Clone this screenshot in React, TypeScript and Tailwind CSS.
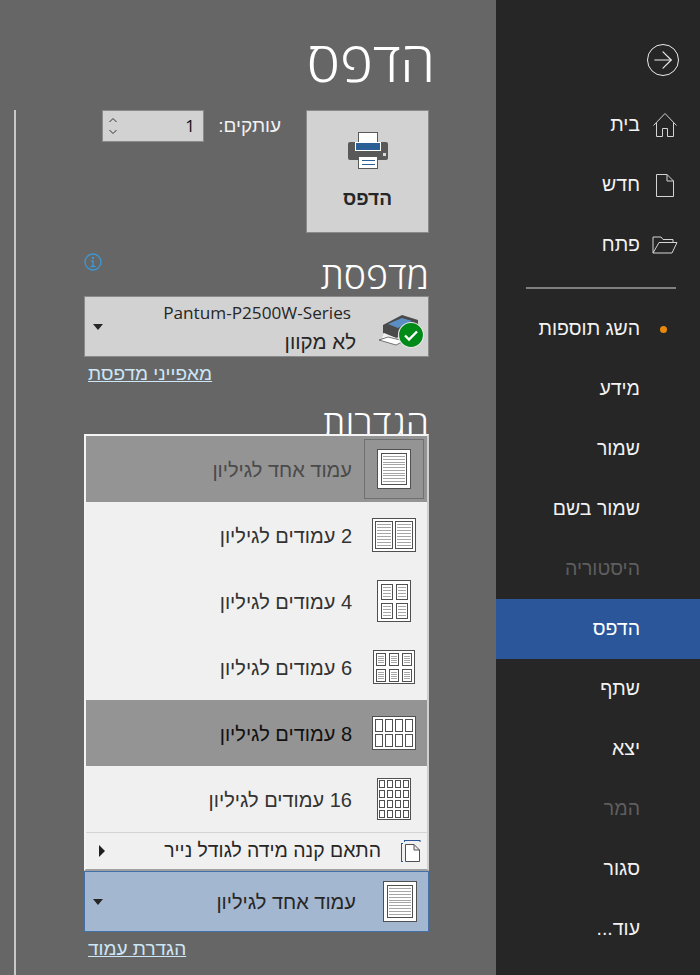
import { ArrowRight } from 'lucide-react'

const FONT = 'font-["Liberation_Sans","Open_Sans",sans-serif]'
const LIGHT = 'font-["Open_Sans","Liberation_Sans",sans-serif] font-light'
const LATIN = 'font-["Open_Sans","Liberation_Sans",sans-serif]'

const NAV_TOP = [
  { label: 'בית', icon: 'home' },
  { label: 'חדש', icon: 'new' },
  { label: 'פתח', icon: 'open' },
]

const NAV_BOTTOM = [
  { label: 'השג תוספות', dot: true },
  { label: 'מידע' },
  { label: 'שמור' },
  { label: 'שמור בשם' },
  { label: 'היסטוריה', disabled: true },
  { label: 'הדפס', active: true },
  { label: 'שתף' },
  { label: 'יצא' },
  { label: 'המר', disabled: true },
  { label: 'סגור' },
  { label: 'עוד...' },
]

function NavIcon({ name }: { name: string }) {
  if (name === 'home') {
    return (
      <svg width="26" height="26" viewBox="0 0 26 26" fill="none" stroke="#d4d4d4" strokeWidth="1">
        <path d="M1.500 13.500 L13 1.500 L24.500 13.500" />
        <path d="M4.500 11 V24.500 H10.500 V16.500 H15.500 V24.500 H21.500 V11" />
      </svg>
    )
  }
  if (name === 'new') {
    return (
      <svg width="20" height="25" viewBox="0 0 20 25" fill="none" stroke="#d4d4d4" strokeWidth="1">
        <path d="M1.500 1.500 H12 L18.500 8 V23.500 H1.500 Z" />
        <path d="M12 1.500 V8 H18.500" />
      </svg>
    )
  }
  return (
    <svg width="26" height="18" viewBox="0 0 26 18" fill="none" stroke="#d4d4d4" strokeWidth="1">
      <path d="M1 17 V1 H9 L11 3.500 H21 V6" />
      <path d="M1 17 H20 L25 6.500 H7 L1 17" />
    </svg>
  )
}

function Sidebar() {
  return (
    <aside className="w-[204px] h-full bg-[#262626] flex flex-col text-[19.5px] text-[#f2f2f2]">
      <div className="h-[95px] flex justify-end pt-[44px] pr-[21px]">
        <div className="w-[32px] h-[32px] rounded-full border-[1.5px] border-[#ececec] flex items-center justify-center">
          <ArrowRight size={28} strokeWidth={1} color="#ececec" />
        </div>
      </div>
      {NAV_TOP.map((item) => (
        <div key={item.label} className="h-[60px] flex items-center justify-end">
          <span dir="rtl" className="mr-[12px]">{item.label}</span>
          <div className="w-[26px] mr-[22px] flex justify-center">
            <NavIcon name={item.icon} />
          </div>
        </div>
      ))}
      <div className="h-[2px] ml-[30px] mr-[24px] mt-[12px] mb-[10px] bg-[#808080]" />
      {NAV_BOTTOM.map((item) => (
        <div
          key={item.label}
          className={`relative h-[60px] flex items-center justify-end ${item.active ? 'bg-[#2b579a] text-white' : ''} ${item.disabled ? 'text-[#5e5e5e]' : ''}`}
        >
          <span dir="rtl" className="mr-[60px]">{item.label}</span>
          {item.dot && <div className="absolute right-[33px] top-[27px] w-[7px] h-[7px] rounded-full bg-[#e8890c]" />}
        </div>
      ))}
    </aside>
  )
}

function Sheet({ w, h, cols, rows, pad, gap, lines }: { w: number; h: number; cols: number; rows: number; pad: number; gap: number; lines?: number }) {
  const cw = (w - 2 - pad * 2 - gap * (cols - 1)) / cols
  const ch = (h - 2 - pad * 2 - gap * (rows - 1)) / rows
  const cells = []
  for (let r = 0; r < rows; r++) {
    for (let c = 0; c < cols; c++) {
      const x = Math.round(1 + pad + c * (cw + gap))
      const y = Math.round(1 + pad + r * (ch + gap))
      const cellW = Math.round(cw)
      const cellH = Math.round(ch)
      cells.push(<rect key={`${r}-${c}`} x={x + 0.5} y={y + 0.5} width={cellW - 1} height={cellH - 1} fill="#fff" stroke="#505050" />)
      for (let l = 0; l < (lines ?? 0); l++) {
        const ly = y + 3 + Math.round((l * (cellH - 7)) / Math.max(lines! - 1, 1))
        cells.push(<rect key={`${r}-${c}-${l}`} x={x + 2} y={ly} width={cellW - 4} height={1} fill="#a6a6a6" />)
      }
    }
  }
  return (
    <svg width={w} height={h} viewBox={`0 0 ${w} ${h}`} shapeRendering="crispEdges">
      <rect x="0.5" y="0.5" width={w - 1} height={h - 1} fill="#fff" stroke="#505050" />
      {cells}
    </svg>
  )
}

function FitIcon() {
  return (
    <svg width="20" height="22" viewBox="0 0 20 22" fill="none">
      <path d="M0.500 4 V21 M0 3.500 H2 M0 21.500 H2 M4 0.500 H19 M3.500 0 V2 M19 0 V2" stroke="#2b579a" />
      <path d="M4.500 4.500 H13 L18.500 10 V21.500 H4.500 Z M13 4.500 V10 H18.500" stroke="#505050" fill="#fff" />
    </svg>
  )
}

function PrinterIcon() {
  return (
    <svg width="44" height="38" viewBox="0 0 44 38" shapeRendering="crispEdges">
      <rect x="12.500" y="1" width="19" height="14" fill="#fff" stroke="#595959" />
      <path d="M4 11 H40 Q42 11 42 13 V27 Q42 29 40 29 H4 Q2 29 2 27 V13 Q2 11 4 11 Z" fill="#595959" shapeRendering="auto" />
      <rect x="9.500" y="11" width="25" height="8" fill="#2b6097" stroke="#fff" />
      <rect x="12.500" y="25.500" width="19" height="12" fill="#fff" stroke="#595959" />
      <rect x="16" y="29" width="13" height="1" fill="#2b6097" />
      <rect x="16" y="33" width="13" height="1" fill="#2b6097" />
      <rect x="37" y="22" width="3" height="3" fill="#d9d9d9" />
    </svg>
  )
}

function PrinterStatusIcon() {
  return (
    <svg width="46" height="36" viewBox="0 0 46 36">
      <path d="M5 13 L24 3 L40 8 V16 L18 26 L5 21 Z" fill="#4a4a4a" />
      <path d="M10 12 L24 6 L34 9 L20 16 Z" fill="#5b8fc4" />
      <path d="M6 21 L18 26 V29 L4 26 Z" fill="#f2f2f2" />
      <path d="M1 28 L10 25 L26 29 L18 33 Z" fill="#fff" stroke="#404040" strokeWidth="0.7" />
      <circle cx="33" cy="23" r="12.500" fill="#008a17" stroke="#e6e6e6" strokeWidth="1.200" />
      <path d="M27 23.500 L31 27.500 L39 19.500" fill="none" stroke="#fff" strokeWidth="2.400" />
    </svg>
  )
}

function Caret() {
  return <div className="w-0 h-0 border-x-[5.5px] border-x-transparent border-t-[6px] border-t-[#262626]" />
}

const LAYOUTS = [
  { label: 'עמוד אחד לגיליון', icon: <Sheet w={34} h={40} cols={1} rows={1} pad={3} gap={0} lines={10} />, bg: 'bg-[#949494]', text: 'text-[#4a4a4a]', boxed: true },
  { label: '2 עמודים לגיליון', icon: <Sheet w={44} h={34} cols={2} rows={1} pad={2} gap={2} lines={8} /> },
  { label: '4 עמודים לגיליון', icon: <Sheet w={34} h={42} cols={2} rows={2} pad={3} gap={3} lines={4} /> },
  { label: '6 עמודים לגיליון', icon: <Sheet w={42} h={34} cols={3} rows={2} pad={2} gap={3} lines={4} /> },
  { label: '8 עמודים לגיליון', icon: <Sheet w={44} h={34} cols={4} rows={2} pad={2} gap={2} />, bg: 'bg-[#949494]', text: 'text-[#111]' },
  { label: '16 עמודים לגיליון', icon: <Sheet w={34} h={42} cols={4} rows={4} pad={1} gap={2} /> },
]

function Main() {
  return (
    <main className="relative w-[496px] h-full bg-[#666666] flex overflow-hidden">
      <div className="ml-[14px] mt-[110px] w-[2px] bg-[#c8c8c8]" />
      <div className="ml-[68px] w-[345px] flex flex-col">
        <div className="h-[110px] pt-[22px] -mr-[6px] text-right">
          <h1 dir="rtl" className={`text-[56px] leading-[76px] text-white ${LIGHT}`}>הדפס</h1>
        </div>

        <div className="h-[143px] flex items-start">
          <div className="ml-[18px] w-[102px] h-[32px] bg-[#d2d2d2] border border-[#8a8a8a] flex items-center justify-between pl-[5px] pr-[8px]">
            <div className="flex flex-col gap-[6px]">
              <svg width="10" height="6" viewBox="0 0 10 6" fill="none" stroke="#333"><path d="M1.500 5 L5 1.500 L8.500 5" /></svg>
              <svg width="10" height="6" viewBox="0 0 10 6" fill="none" stroke="#333"><path d="M1.500 1 L5 4.500 L8.500 1" /></svg>
            </div>
            <span className={`text-[17px] text-[#111] ${LATIN}`}>1</span>
          </div>
          <span dir="rtl" className="ml-[14px] text-[19px] leading-[32px] w-[63px] whitespace-nowrap text-[#f2f2f2]">עותקים:</span>
          <button className="ml-[25px] w-[123px] h-[123px] bg-[#d2d2d2] border border-[#8a8a8a] flex flex-col items-center pt-[20px]">
            <PrinterIcon />
            <span dir="rtl" className="mt-[18px] text-[19px] leading-[24px] font-bold text-[#262626]">הדפס</span>
          </button>
        </div>

        <div className="relative h-[43px]">
          <svg className="absolute left-0 top-0" width="18" height="18" viewBox="0 0 18 18" fill="none">
            <circle cx="9" cy="9" r="8" stroke="#3b9ad9" strokeWidth="1.300" />
            <rect x="8" y="4" width="2" height="2" fill="#3b9ad9" />
            <path d="M7 8 H9 V13 M6.500 13.500 H11.500" stroke="#3b9ad9" strokeWidth="1.300" />
          </svg>
          <h2 dir="rtl" className={`text-[37.5px] leading-[44px] text-white ${LIGHT}`}>מדפסת</h2>
        </div>

        <div className="h-[61px] bg-[#d2d2d2] border border-[#8a8a8a] flex items-center">
          <div className="ml-[8px]"><Caret /></div>
          <div dir="rtl" className="flex-1 text-[#262626] flex flex-col items-start pr-[22px]">
            <span className={`mr-[5px] leading-[28px] pt-[1px] text-[17.2px] ${LATIN}`}>Pantum-P2500W-Series</span>
            <span className="leading-[29px] text-[20.5px]">לא מקוון</span>
          </div>
          <div className="mr-[4px] mt-[6px]"><PrinterStatusIcon /></div>
        </div>

        <a dir="rtl" className="mt-[4px] ml-[4px] self-start text-[19px] leading-[26px] text-[#cde6f7] underline">מאפייני מדפסת</a>

        <div className="mt-[19px] h-[28px] overflow-hidden">
          <h2 dir="rtl" className={`text-[37.5px] leading-[34px] text-white ${LIGHT}`}>הגדרות</h2>
        </div>

        <div className="h-[437px] bg-[#f0f0f0] border-[2px] border-[#f4f4f4] border-b-[#a0a0a0] border-r-[#d0d0d0] flex flex-col">
          {LAYOUTS.map((row) => (
            <div key={row.label} className={`h-[66px] flex items-center justify-end ${row.bg ?? ''} ${row.text ?? 'text-[#333]'}`}>
              <span dir="rtl" className="mr-[9px] mt-[1px] text-[20px]">{row.label}</span>
              <div className="w-[66px] flex justify-center">
                {row.boxed ? (
                  <div className="w-[60px] h-[60px] border border-[#707070] flex items-center justify-center">{row.icon}</div>
                ) : row.icon}
              </div>
            </div>
          ))}
          <div className="h-px bg-[#d4d4d4]" />
          <div className="flex-1 flex items-center">
            <div className="ml-[13px] w-0 h-0 border-y-[6px] border-y-transparent border-l-[6px] border-l-[#1f1f1f]" />
            <span dir="rtl" className="flex-1 text-[19.4px] text-[#262626] pr-[14px]">התאם קנה מידה לגודל נייר</span>
            <div className="w-[32px] flex justify-center"><FitIcon /></div>
          </div>
        </div>

        <div className="h-[61px] bg-[#a3b7d0] border border-[#4472a8] flex items-center">
          <div className="ml-[8px]"><Caret /></div>
          <span dir="rtl" className="flex-1 text-[20px] text-[#262626] pr-[16px]">עמוד אחד לגיליון</span>
          <div className="mx-[11px]"><Sheet w={34} h={41} cols={1} rows={1} pad={3} gap={0} lines={10} /></div>
        </div>

        <a dir="rtl" className="mt-[4px] ml-[4px] self-start text-[19px] leading-[26px] text-[#cde6f7] underline">הגדרת עמוד</a>
      </div>
    </main>
  )
}

export default function App() {
  return (
    <div className={`w-[700px] h-[975px] flex overflow-hidden ${FONT}`}>
      <Main />
      <Sidebar />
    </div>
  )
}
